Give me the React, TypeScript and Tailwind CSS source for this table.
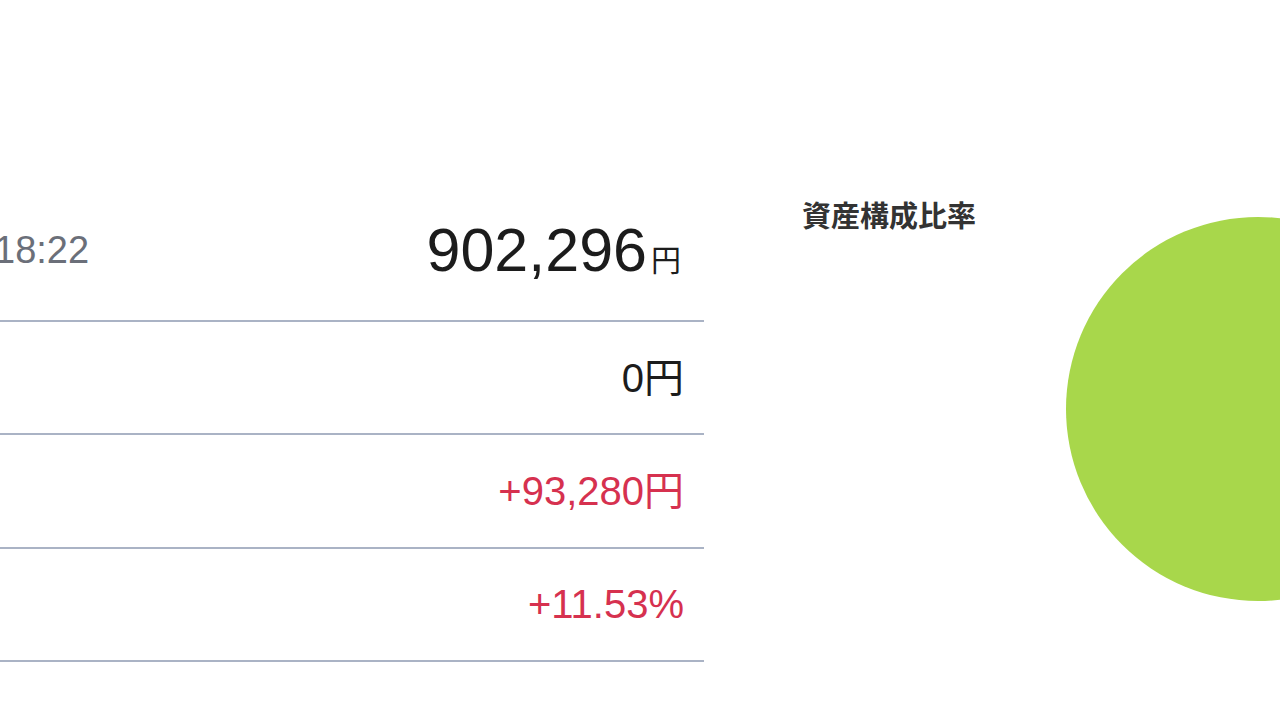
import React from "react"

const font = { fontFamily: '"Liberation Sans", "Noto Sans CJK JP", sans-serif' }

const rows = [
    { value: "0", unit: "円", color: "text-[#1c1c1c]" },
    { value: "+93,280", unit: "円", color: "text-[#d6314f]" },
    { value: "+11.53%", unit: "", color: "text-[#d6314f]" },
]

const App: React.FC = () => {
    return (
        <div
            className="w-[1280px] h-[720px] overflow-hidden bg-white flex"
            style={font}
        >
            {/* 残高一覧 */}
            <div className="w-[704px] shrink-0 pt-[180px] flex flex-col">
                <div className="h-[142px] border-b-2 border-[#aab3c5] flex items-center justify-between pr-5">
                    <span className="-ml-[6px] text-[38px] leading-none text-[#6b6f79] whitespace-nowrap">
                        18:22
                    </span>
                    <span className="flex items-baseline text-[#1c1c1c] mr-[3px]">
                        <span className="text-[61px] leading-none">902,296</span>
                        <span className="text-[30px] leading-none ml-[4px]">円</span>
                    </span>
                </div>

                {rows.map((r, i) => (
                    <div
                        key={i}
                        className={`h-[113.3px] border-b-2 border-[#aab3c5] flex items-center justify-end pr-5 text-[40px] leading-none ${r.color}`}
                    >
                        <span>
                            {r.value}
                            {r.unit}
                        </span>
                    </div>
                ))}
            </div>

            {/* 資産構成比率 */}
            <div className="flex-1 pl-[98px] pt-[200px] flex items-start">
                <h2
                    className="w-[264px] shrink-0 text-[29px] leading-none font-bold text-[#333333]"
                    style={{ fontFamily: '"Noto Sans CJK JP", sans-serif' }}
                >
                    資産構成比率
                </h2>
                <svg width="384" height="384" viewBox="0 0 384 384" className="shrink-0 mt-[17px]">
                    <circle cx="192" cy="192" r="192" fill="#a8d74b" />
                </svg>
            </div>
        </div>
    )
}

export default App
